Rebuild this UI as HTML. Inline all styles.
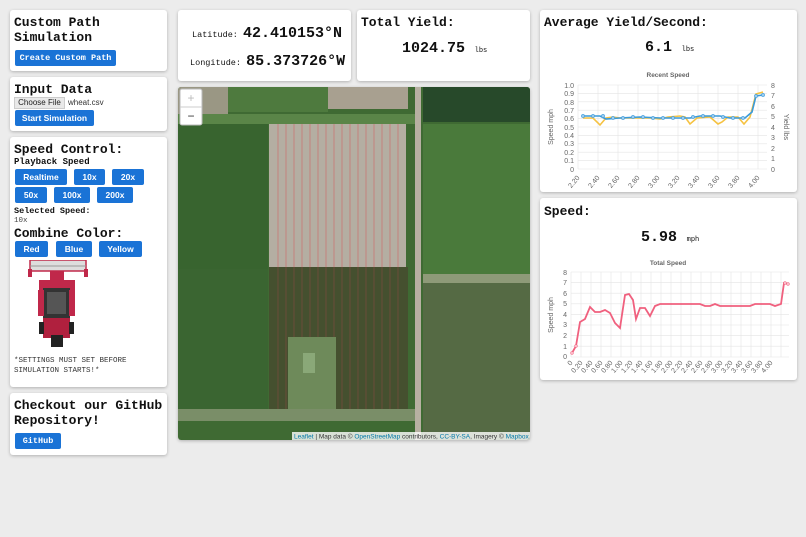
<!DOCTYPE html>
<html><head><meta charset="utf-8"><style>
*{box-sizing:border-box;margin:0;padding:0}
body{width:806px;height:537px;background:#ececec;font-family:"Liberation Mono",monospace;position:relative;overflow:hidden;color:#111}
.card{position:absolute;background:#fff;border-radius:3px;box-shadow:0 1px 3px rgba(0,0,0,.25)}
h2{font-size:13px;font-weight:bold;line-height:15px}
.btn{position:absolute;background:#1a73d6;color:#fff;font-family:"Liberation Sans",sans-serif;font-size:8.5px;font-weight:bold;text-align:center;border-radius:2px;line-height:16px;height:16px}
.mono{font-family:"Liberation Mono",monospace}
.s{position:absolute}
</style></head><body>

<div class="card" style="left:10px;top:10px;width:157px;height:61px">
<h2 class="s" style="left:4px;top:5px">Custom Path<br>Simulation</h2>
<div class="btn mono" style="left:5px;top:40px;width:101px">Create Custom Path</div>
</div>

<div class="card" style="left:10px;top:77px;width:157px;height:54px">
<h2 class="s" style="left:4px;top:5px">Input Data</h2>
<div class="s" style="left:4px;top:20px;width:51px;height:12px;background:#e9e9e9;border:1px solid #ccc;font:8px 'Liberation Sans',sans-serif;line-height:10px;text-align:center;color:#222">Choose File</div>
<div class="s" style="left:58px;top:21px;font:8px 'Liberation Sans',sans-serif;color:#333">wheat.csv</div>
<div class="btn" style="left:5px;top:33px;width:79px">Start Simulation</div>
</div>

<div class="card" style="left:10px;top:137px;width:157px;height:250px">
<h2 class="s" style="left:4px;top:5px">Speed Control:</h2>
<div class="s" style="left:4px;top:20px;font-size:9px;font-weight:bold">Playback Speed</div>
<div class="btn" style="left:5px;top:32px;width:52px">Realtime</div>
<div class="btn" style="left:64px;top:32px;width:31px">10x</div>
<div class="btn" style="left:102px;top:32px;width:32px">20x</div>
<div class="btn" style="left:5px;top:50px;width:32px">50x</div>
<div class="btn" style="left:44px;top:50px;width:36px">100x</div>
<div class="btn" style="left:87px;top:50px;width:36px">200x</div>
<div class="s" style="left:4px;top:69px;font-size:8.5px;font-weight:bold">Selected Speed:</div>
<div class="s" style="left:4px;top:80px;font-size:7.5px;color:#444">10x</div>
<h2 class="s" style="left:4px;top:89px">Combine Color:</h2>
<div class="btn" style="left:5px;top:104px;width:33px">Red</div>
<div class="btn" style="left:46px;top:104px;width:36px">Blue</div>
<div class="btn" style="left:89px;top:104px;width:43px">Yellow</div>
<svg class="s" style="left:18px;top:123px" width="62" height="90" viewBox="0 0 62 90">
<rect x="2" y="0" width="56" height="11" fill="#ddd" stroke="#c0284a" stroke-width="1.5"/>
<line x1="2" y1="6" x2="58" y2="6" stroke="#999"/>
<rect x="0" y="9" width="4" height="8" fill="#c0284a"/><rect x="56" y="9" width="4" height="8" fill="#c0284a"/>
<rect x="22" y="11" width="14" height="10" fill="#c0284a"/>
<rect x="11" y="20" width="36" height="10" fill="#c0284a"/>
<rect x="15" y="28" width="27" height="32" fill="#333"/>
<rect x="19" y="32" width="19" height="22" fill="#555"/>
<rect x="10" y="30" width="6" height="26" fill="#c0284a"/><rect x="41" y="30" width="6" height="26" fill="#c0284a"/>
<rect x="15" y="58" width="27" height="20" fill="#b0203e"/>
<rect x="23" y="75" width="12" height="12" fill="#222"/>
<rect x="11" y="62" width="5" height="12" fill="#222"/><rect x="41" y="62" width="5" height="12" fill="#222"/>
</svg>
<div class="s" style="left:4px;top:219px;font-size:7.5px;line-height:10px;color:#333">*SETTINGS MUST SET BEFORE<br>SIMULATION STARTS!*</div>
</div>

<div class="card" style="left:10px;top:393px;width:157px;height:62px">
<h2 class="s" style="left:4px;top:5px">Checkout our GitHub<br>Repository!</h2>
<div class="btn mono" style="left:5px;top:40px;width:46px">GitHub</div>
</div>

<div class="card" style="left:178px;top:10px;width:173px;height:71px">
<div class="s" style="left:14px;top:14px;white-space:nowrap"><span style="font-size:8.5px">Latitude: </span><span style="font-size:15px;font-weight:bold">42.410153°N</span></div>
<div class="s" style="left:12px;top:42px;white-space:nowrap"><span style="font-size:8.5px">Longitude: </span><span style="font-size:15px;font-weight:bold">85.373726°W</span></div>
</div>

<div class="card" style="left:357px;top:10px;width:173px;height:71px">
<h2 class="s" style="left:4px;top:5px">Total Yield:</h2>
<div class="s" style="left:45px;top:29px;white-space:nowrap"><span style="font-size:15px;font-weight:bold">1024.75</span> <span style="font-size:7px">lbs</span></div>
</div>

<div class="card" style="left:178px;top:87px;width:352px;height:353px;overflow:hidden">
<svg width="352" height="353" viewBox="0 0 352 353">
<rect width="352" height="353" fill="#3f6a33"/>
<rect x="0" y="0" width="50" height="27" fill="#9a9784"/>
<rect x="50" y="0" width="100" height="25" fill="#4e7a3e"/>
<rect x="150" y="0" width="80" height="22" fill="#a8a090"/>
<rect x="0" y="27" width="240" height="10" fill="#5a8548"/>
<rect x="0" y="37" width="90" height="145" fill="#38642f"/>
<rect x="91" y="37" width="137" height="143" fill="#b4aea2"/>
<g stroke="#d06060" stroke-width="0.7" opacity=".8">
<path d="M100 37V323M108 37V323M116 37V323M124 37V323M132 37V323M140 37V323M148 37V323M156 37V323M164 37V323M172 37V323M180 37V323M188 37V323M196 37V323M204 37V323M212 37V323M220 37V323" fill="none"/>
</g>
<rect x="91" y="180" width="139" height="142" fill="#4a3a2c" opacity=".55"/>
<rect x="0" y="182" width="90" height="140" fill="#3a6531"/>
<rect x="110" y="250" width="48" height="75" fill="#6e8a5a"/>
<rect x="125" y="266" width="12" height="20" fill="#8aa878"/>
<rect x="0" y="322" width="240" height="12" fill="#7a8e68"/>
<rect x="237" y="0" width="6" height="353" fill="#b7b0a2"/>
<rect x="245" y="0" width="107" height="35" fill="#27492a"/>
<rect x="245" y="37" width="107" height="150" fill="#4a7a3b"/>
<rect x="245" y="187" width="107" height="9" fill="#8e9a78"/>
<rect x="245" y="196" width="107" height="157" fill="#556a44"/>
<rect x="2" y="2" width="22" height="36" rx="2" fill="#fff" stroke="#bbb"/>
<line x1="2" y1="20" x2="24" y2="20" stroke="#ccc"/>
<text x="13" y="15" font-family="Liberation Sans" font-size="12" text-anchor="middle" fill="#bbb">+</text>
<text x="13" y="33" font-family="Liberation Sans" font-size="12" text-anchor="middle" fill="#333">−</text>
<rect x="114" y="345" width="238" height="9" fill="#fff" opacity=".8"/>
<text x="116" y="351.5" font-family="Liberation Sans" font-size="6.5" fill="#333"><tspan fill="#0078a8">Leaflet</tspan> | Map data © <tspan fill="#0078a8">OpenStreetMap</tspan> contributors, <tspan fill="#0078a8">CC-BY-SA</tspan>, Imagery © <tspan fill="#0078a8">Mapbox</tspan></text>
</svg>
</div>

<div class="card" style="left:540px;top:10px;width:257px;height:182px">
<h2 class="s" style="left:4px;top:5px">Average Yield/Second:</h2>
<div class="s" style="left:105px;top:28px;white-space:nowrap"><span style="font-size:15px;font-weight:bold">6.1</span> <span style="font-size:7px">lbs</span></div>
<svg class="s" style="left:0;top:0" width="257" height="182" viewBox="540 10 257 182" font-family="Liberation Sans" font-size="7" fill="#666">
<text x="668" y="77" text-anchor="middle" font-weight="bold" font-size="6.5">Recent Speed</text>
<g stroke="#e4e4e4" stroke-width=".6">
<path d="M578 85H767M578 93.4H767M578 101.8H767M578 110.2H767M578 118.6H767M578 127H767M578 135.4H767M578 143.8H767M578 152.2H767M578 160.6H767M578 169H767"/>
<path d="M578 85V169M598 85V169M618 85V169M638 85V169M658 85V169M678 85V169M698 85V169M718 85V169M738 85V169M758 85V169"/>
</g>
<g text-anchor="end">
<text x="574" y="88">1.0</text><text x="574" y="96">0.9</text><text x="574" y="105">0.8</text><text x="574" y="113">0.7</text><text x="574" y="121">0.6</text><text x="574" y="130">0.5</text><text x="574" y="138">0.4</text><text x="574" y="146">0.3</text><text x="574" y="155">0.2</text><text x="574" y="163">0.1</text><text x="574" y="172">0</text></g>
<g><text x="771" y="88">8</text><text x="771" y="98">7</text><text x="771" y="109">6</text><text x="771" y="119">5</text><text x="771" y="130">4</text><text x="771" y="140">3</text><text x="771" y="151">2</text><text x="771" y="161">1</text><text x="771" y="172">0</text></g>
<text transform="translate(553 127) rotate(-90)" text-anchor="middle">Speed mph</text>
<text transform="translate(784 127) rotate(90)" text-anchor="middle">Yield lbs</text>
<g text-anchor="end">
<text transform="translate(580 178) rotate(-50)">2.20</text><text transform="translate(600 178) rotate(-50)">2.40</text><text transform="translate(620 178) rotate(-50)">2.60</text><text transform="translate(640 178) rotate(-50)">2.80</text><text transform="translate(660 178) rotate(-50)">3.00</text><text transform="translate(680 178) rotate(-50)">3.20</text><text transform="translate(700 178) rotate(-50)">3.40</text><text transform="translate(720 178) rotate(-50)">3.60</text><text transform="translate(740 178) rotate(-50)">3.80</text><text transform="translate(760 178) rotate(-50)">4.00</text></g>
<path d="M583 118L593 118L600 125L606 118L613 117L620 118L636 118L650 118L660 119L668 117L680 116L685 117L690 124L697 118L710 117L718 124L722 122L728 117L738 117L744 124L750 117L756 94L763 92" fill="none" stroke="#f5c242" stroke-width="1.6"/>
<path d="M583 116L593 116L600 116L606 119L620 118L640 117L660 118L680 118L690 118L700 116L720 116L730 118L745 118L752 112L756 96L763 95" fill="none" stroke="#3a9ad9" stroke-width="1.6"/>
<g fill="#9ccbef" stroke="#3a9ad9" stroke-width=".6"><circle cx="583" cy="116" r="1.6"/><circle cx="593" cy="116" r="1.6"/><circle cx="603" cy="116" r="1.6"/><circle cx="613" cy="118" r="1.6"/><circle cx="623" cy="118" r="1.6"/><circle cx="633" cy="117" r="1.6"/><circle cx="643" cy="117" r="1.6"/><circle cx="653" cy="118" r="1.6"/><circle cx="663" cy="118" r="1.6"/><circle cx="673" cy="118" r="1.6"/><circle cx="683" cy="118" r="1.6"/><circle cx="693" cy="117" r="1.6"/><circle cx="703" cy="116" r="1.6"/><circle cx="713" cy="116" r="1.6"/><circle cx="723" cy="117" r="1.6"/><circle cx="733" cy="118" r="1.6"/><circle cx="743" cy="118" r="1.6"/><circle cx="756" cy="96" r="1.6"/><circle cx="763" cy="95" r="1.6"/></g>
</svg>
</div>

<div class="card" style="left:540px;top:198px;width:257px;height:182px">
<h2 class="s" style="left:4px;top:6px">Speed:</h2>
<div class="s" style="left:101px;top:30px;white-space:nowrap"><span style="font-size:15px;font-weight:bold">5.98</span> <span style="font-size:7px">mph</span></div>
<svg class="s" style="left:0;top:0" width="257" height="182" viewBox="540 198 257 182" font-family="Liberation Sans" font-size="7" fill="#666">
<text x="668" y="265" text-anchor="middle" font-weight="bold" font-size="6.5">Total Speed</text>
<g stroke="#e4e4e4" stroke-width=".6">
<path d="M571 272H789M571 282.6H789M571 293.2H789M571 303.8H789M571 314.4H789M571 325H789M571 335.6H789M571 346.2H789M571 357H789"/>
<path d="M571 272V357M581 272V357M591 272V357M601 272V357M611 272V357M621 272V357M631 272V357M641 272V357M651 272V357M661 272V357M671 272V357M681 272V357M691 272V357M701 272V357M711 272V357M721 272V357M731 272V357M741 272V357M751 272V357M761 272V357M771 272V357M781 272V357"/>
</g>
<g text-anchor="end"><text x="567" y="275">8</text><text x="567" y="285">7</text><text x="567" y="296">6</text><text x="567" y="306">5</text><text x="567" y="317">4</text><text x="567" y="327">3</text><text x="567" y="338">2</text><text x="567" y="349">1</text><text x="567" y="359">0</text></g>
<text transform="translate(553 315) rotate(-90)" text-anchor="middle">Speed mph</text>
<g text-anchor="end">
<text transform="translate(573 363) rotate(-50)">0</text><text transform="translate(583 363) rotate(-50)">0.20</text><text transform="translate(593 363) rotate(-50)">0.40</text><text transform="translate(603 363) rotate(-50)">0.60</text><text transform="translate(613 363) rotate(-50)">0.80</text><text transform="translate(623 363) rotate(-50)">1.00</text><text transform="translate(633 363) rotate(-50)">1.20</text><text transform="translate(643 363) rotate(-50)">1.40</text><text transform="translate(653 363) rotate(-50)">1.60</text><text transform="translate(663 363) rotate(-50)">1.80</text><text transform="translate(673 363) rotate(-50)">2.00</text><text transform="translate(683 363) rotate(-50)">2.20</text><text transform="translate(693 363) rotate(-50)">2.40</text><text transform="translate(703 363) rotate(-50)">2.60</text><text transform="translate(713 363) rotate(-50)">2.80</text><text transform="translate(723 363) rotate(-50)">3.00</text><text transform="translate(733 363) rotate(-50)">3.20</text><text transform="translate(743 363) rotate(-50)">3.40</text><text transform="translate(753 363) rotate(-50)">3.60</text><text transform="translate(763 363) rotate(-50)">3.80</text><text transform="translate(773 363) rotate(-50)">4.00</text></g>
<path d="M572 353L576 346L580 322L585 319L590 307L595 312L600 312L605 310L610 313L615 323L620 328L625 295L629 294L633 300L636 319L640 308L645 308L650 316L655 306L660 304L700 304L705 306L710 306L715 304L720 306L750 306L755 304L770 304L775 306L781 304L784 283L788 284" fill="none" stroke="#f0607e" stroke-width="1.8"/>
<g fill="#fbb8c6" stroke="#f0607e" stroke-width=".5"><circle cx="572" cy="353" r="1.5"/><circle cx="576" cy="346" r="1.5"/><circle cx="785" cy="283" r="1.5"/><circle cx="788" cy="284" r="1.5"/></g>
</svg>
</div>
</body></html>
